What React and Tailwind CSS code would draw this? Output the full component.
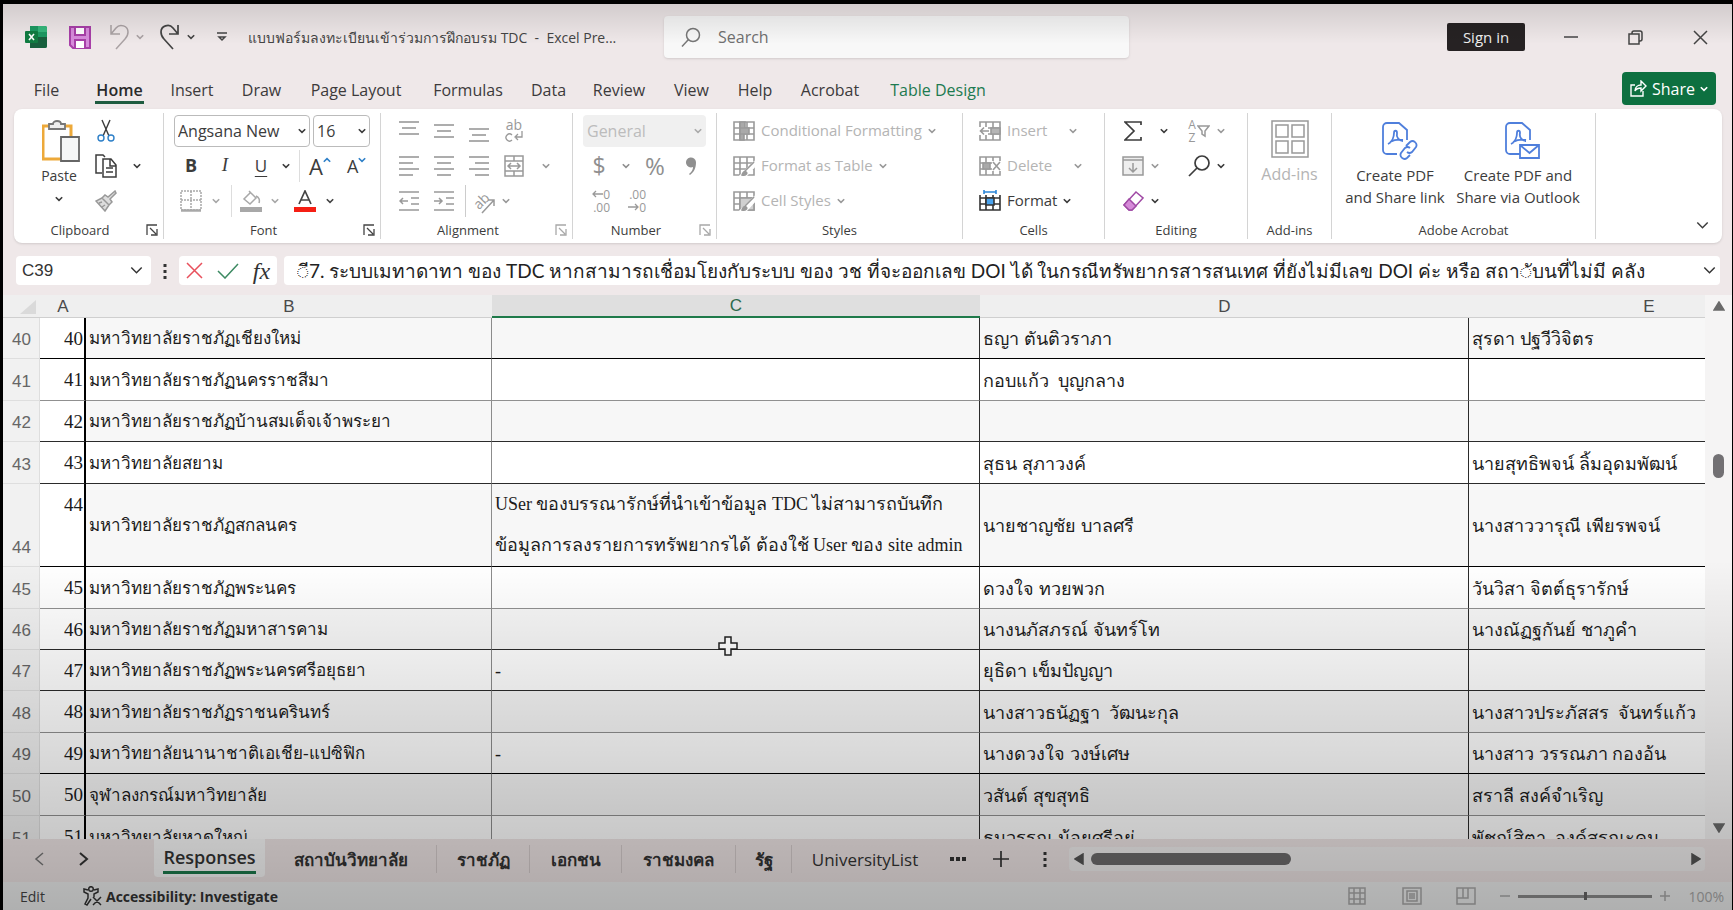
import React, { useState } from "react";

const ui = "font-['Open_Sans','Noto_Sans',sans-serif]";

const menuTabs = [
  { name: "File", cls: "w-[27px] ml-[30px]" },
  { name: "Home", cls: "w-[49px] ml-[35px]" },
  { name: "Insert", cls: "w-[42px] ml-[27px]" },
  { name: "Draw", cls: "w-[41px] ml-[28px]" },
  { name: "Page Layout", cls: "w-[94px] ml-[27px]" },
  { name: "Formulas", cls: "w-[72px] ml-[29px]" },
  { name: "Data", cls: "w-[37px] ml-[26px]" },
  { name: "Review", cls: "w-[54px] ml-[25px]" },
  { name: "View", cls: "w-[37px] ml-[27px]" },
  { name: "Help", cls: "w-[36px] ml-[27px]" },
  { name: "Acrobat", cls: "w-[62px] ml-[26px]" },
  { name: "Table Design", cls: "w-[98px] ml-[28px] text-[#1d7a50]" },
];

const dark = "border-b-[#2b2b2b]";
const black = "border-b-black";
const light = "border-b-[#909090]";

const rows = [
  { n: 40, h: "h-[41px]", line: black, b: "มหาวิทยาลัยราชภัฏเชียงใหม่", d: "ธญา ตันติวราภา", e: "สุรดา ปฐวีวิจิตร" },
  { n: 41, h: "h-[42px]", line: light, b: "มหาวิทยาลัยราชภัฏนครราชสีมา", d: "กอบแก้ว  บุญกลาง" },
  { n: 42, h: "h-[41px]", line: dark, b: "มหาวิทยาลัยราชภัฏบ้านสมเด็จเจ้าพระยา" },
  { n: 43, h: "h-[42px]", line: dark, b: "มหาวิทยาลัยสยาม", d: "สุธน สุภาวงค์", e: "นายสุทธิพจน์ ลิ้มอุดมพัฒน์" },
  {
    n: 44,
    h: "h-[83px]",
    line: black,
    b: "มหาวิทยาลัยราชภัฏสกลนคร",
    c: "USer ของบรรณารักษ์ที่นำเข้าข้อมูล TDC ไม่สามารถบันทึก\nข้อมูลการลงรายการทรัพยากรได้ ต้องใช้ User ของ site admin",
    d: "นายชาญชัย บาลศรี",
    e: "นางสาววารุณี เพียรพจน์",
  },
  { n: 45, h: "h-[42px]", line: light, b: "มหาวิทยาลัยราชภัฏพระนคร", d: "ดวงใจ ทวยพวก", e: "วันวิสา จิตต์ธุรารักษ์" },
  { n: 46, h: "h-[41px]", line: dark, b: "มหาวิทยาลัยราชภัฏมหาสารคาม", d: "นางนภัสภรณ์ จันทร์โท", e: "นางณัฏฐกันย์ ชาภูคำ", cursor: true },
  { n: 47, h: "h-[41px]", line: dark, b: "มหาวิทยาลัยราชภัฏพระนครศรีอยุธยา", c: "-", d: "ยุธิดา เข็มปัญญา" },
  { n: 48, h: "h-[42px]", line: light, b: "มหาวิทยาลัยราชภัฏราชนครินทร์", d: "นางสาวธนัฏฐา  วัฒนะกุล", e: "นางสาวประภัสสร  จันทร์แก้ว" },
  { n: 49, h: "h-[41px]", line: black, b: "มหาวิทยาลัยนานาชาติเอเชีย-แปซิฟิก", c: "-", d: "นางดวงใจ วงษ์เศษ", e: "นางสาว วรรณภา กองอ้น" },
  { n: 50, h: "h-[42px]", line: light, b: "จุฬาลงกรณ์มหาวิทยาลัย", d: "วสันต์ สุขสุทธิ", e: "สราลี สงค์จำเริญ" },
  { n: 51, h: "h-[42px]", line: dark, b: "มหาวิทยาลัยหาดใหญ่", d: "ธนวรรณ น้อยศรีอยู่", e: "พัชณ์สิตา  องค์สรณะคม" },
];

const sheets = [
  { name: "สถาบันวิทยาลัย", cls: "w-[172px]" },
  { name: "ราชภัฏ", cls: "w-[93px]" },
  { name: "เอกชน", cls: "w-[92px]" },
  { name: "ราชมงคล", cls: "w-[114px]" },
  { name: "รัฐ", cls: "w-[56px]" },
];

function Svg({ w = 22, h = w, box, className = "", children, sw = 1.5 }) {
  return (
    <svg
      width={w}
      height={h}
      viewBox={box || `0 0 ${w} ${h}`}
      fill="none"
      stroke="currentColor"
      strokeWidth={sw}
      className={`shrink-0 ${className}`}
      aria-hidden="true"
    >
      {children}
    </svg>
  );
}

function Chevron({ className = "", size = 8 }) {
  return (
    <Svg w={size} h={size} box="0 0 8 8" className={className} sw={size > 10 ? 0.9 : 1.6}>
      <path d="M0.8 2.2 4 5.4 7.2 2.2" />
    </Svg>
  );
}

function Tool({ label, className = "", children }) {
  return (
    <button type="button" aria-label={label} className={`flex shrink-0 items-center justify-center ${className}`}>
      {children}
    </button>
  );
}

function Group({ label, className, pad = "", launcher, faded, children }) {
  return (
    <section className={`my-1 flex shrink-0 flex-col border-r border-[#d4d4d4] ${className}`}>
      <div className={`h-[108px] ${pad}`}>{children}</div>
      <div className="flex h-[18px] items-center">
        <span className="flex-1 text-center text-[13px] leading-4 text-[#3c3c3c]">{label}</span>
        {launcher && (
          <Tool label={`${label} settings`} className={`mr-[5px] w-3 ${faded ? "text-[#a8a8a8]" : "text-[#444]"}`}>
            <Svg w={12} sw={1.3}>
              <path d="M1 11V1h10M4 4l6 6M11 5v6H5" />
            </Svg>
          </Tool>
        )}
      </div>
    </section>
  );
}

function Row({ className = "", children }) {
  return <div className={`flex h-[35px] items-center ${className}`}>{children}</div>;
}

function Lines({ rows: list }) {
  return (
    <Svg w={20} h={22} sw={1.6}>
      {list.map(([x1, x2, y]) => (
        <path key={y} d={`M${x1} ${y}H${x2}`} />
      ))}
    </Svg>
  );
}

function TableIcon({ kind }) {
  const blue = kind === "format";
  return (
    <Svg w={22} className={blue ? "text-[#333]" : "text-[#9a9a9a]"} sw={1.6}>
      <path d="M1 2h20v18H1zM1 8h20M1 14h20M7 2v18M14 2v18" />
      {kind === "cond" && <path d="M7 2h5v6H7zM7 8h9v6H7zM7 14h4v6H7z" fill="#a9a9a9" />}
      {kind === "insert" && (
        <>
          <path d="M0 7h9v8H0z" fill="#fff" stroke="none" />
          <path d="M12 8h9v6h-9z" fill="#b5b5b5" />
          <path d="M10 11H2M5 7.500 1.500 11 5 14.500" />
        </>
      )}
      {kind === "delete" && (
        <>
          <path d="M13 6h9v10h-9z" fill="#fff" stroke="none" />
          <path d="M4 8h7v6H4z" fill="#a9a9a9" />
          <path d="m14 7 7 8M21 7l-7 8" />
        </>
      )}
      {(kind === "table" || kind === "cell") && (
        <>
          {kind === "cell" && <path d="M7 8h14v12H7z" fill="#d0d0d0" />}
          <path d="M21 7 11 17l-4 4h6l9-10z" fill="#fff" stroke="#fff" />
          <path d="M21 7 12 16M9 20c1-3 2-4 4-3s0 4-4 3z" fill="#9a9a9a" />
        </>
      )}
      {blue && (
        <>
          <path d="M0 0h22v5H0z" fill="#fff" stroke="none" />
          <path d="M7 8h8v7H7z" fill="#4aa3ee" />
          <path d="M5 0v4M17 0v4M5 2h12" stroke="#2b86d9" />
        </>
      )}
    </Svg>
  );
}

function PdfIcon({ mail }) {
  return (
    <Svg w={36} h={38} className="ml-[10px] text-[#4f7fdc]" sw={1.8}>
      <path d="M15 32H5a4 4 0 0 1-4-4V5a4 4 0 0 1 4-4h12l8 7v10" />
      <path d="M6 22c4-2 6-7 6-11 0-3 3-3 3 0-1 4 2 8 6 8M8 20c4-2 8-3 13-2" sw={1.4} />
      {mail ? (
        <path d="M15 23h19v13H15zM15 23l9.500 8L34 23" />
      ) : (
        <path d="m24 24 4-4a4 4 0 0 1 6 5l-4 5a4 4 0 0 1-5 0M28 26a4 4 0 0 0-5 0l-4 5a4 4 0 0 0 6 5l3-3" />
      )}
    </Svg>
  );
}

function TitleBar() {
  return (
    <header className="flex h-[66px] shrink-0 items-center text-[#444]">
      <Svg w={22} className="ml-[22px]">
        <g stroke="none">
          <path d="M5 0h15a2 2 0 0 1 2 2v18a2 2 0 0 1-2 2H5z" fill="#1c9a62" />
          <path d="M5 11h17v9a2 2 0 0 1-2 2H5z" fill="#17603d" />
          <path d="M13 0h7a2 2 0 0 1 2 2v4h-9z" fill="#35b87c" />
          <rect y="5" width="13" height="12" rx="1" fill="#107c41" />
        </g>
        <path d="m4 8 5 6M9 8l-5 6" stroke="#fff" strokeWidth="1.6" />
      </Svg>
      <Tool label="Save" className="ml-[22px]">
        <Svg w={22} h={23} className="text-[#a83fa8]" sw={2}>
          <path d="M1 1h20v21H4l-3-3z" fill="#d78bdc" />
          <path d="M6 1h10v8H6zM6 22v-8h10v8" fill="#fff" />
        </Svg>
      </Tool>
      <Tool label="Undo" className="ml-[18px] text-[#aaa2a4]">
        <Svg w={20} h={26}>
          <path d="M2 1v9h9M2 10 7 4c4-5 12-2 12 4 0 3-1 5-3 7l-9 10" />
        </Svg>
        <Chevron className="ml-[7px]" />
      </Tool>
      <Tool label="Redo" className="ml-[16px]">
        <Svg w={20} h={26} sw={1.7}>
          <path d="M18 1v9H9M18 10l-5-6C9-1 1 2 1 8c0 3 1 5 3 7l9 10" />
        </Svg>
        <Chevron className="ml-[7px]" />
      </Tool>
      <Tool label="Customize quick access" className="ml-[21px]">
        <Svg w={12} sw={1.5}>
          <path d="M1 2h10M3 6l3 3 3-3z" />
        </Svg>
      </Tool>
      <h1 className="ml-5 w-[382px] text-[14px] whitespace-pre">
        แบบฟอร์มลงทะเบียนเข้าร่วมการฝึกอบรม TDC  -  Excel Pre...
      </h1>
      <label className="ml-[34px] flex h-[42px] w-[465px] shrink-0 items-center rounded bg-[#f8f8f8] shadow">
        <Svg w={20} className="ml-[17px] text-[#777]">
          <circle cx="12" cy="8" r="6.500" />
          <path d="m7.500 12.500-6.500 7" />
        </Svg>
        <span className="sr-only">Search</span>
        <input
          type="search"
          placeholder="Search"
          className="ml-[17px] h-8 flex-1 bg-transparent text-base outline-none placeholder:text-[#707070]"
        />
      </label>
      <div className="flex flex-1 items-center justify-end">
        <button type="button" className="h-7 w-[78px] rounded-xs bg-[#262223] text-[15px] text-[#efefef]">
          Sign in
        </button>
        <Tool label="Minimize" className="ml-[39px]">
          <Svg w={14}>
            <path d="M0 7h14" />
          </Svg>
        </Tool>
        <Tool label="Restore" className="ml-[50px]">
          <Svg w={15} sw={1.5}>
            <path d="M1 4h10v10H1zM4 4V3q0-2 2-2h6q2 0 2 2v6q0 2-2 2h-1" />
          </Svg>
        </Tool>
        <Tool label="Close" className="mr-[24px] ml-[50px]">
          <Svg w={15} sw={1.5}>
            <path d="m1 1 13 13M14 1 1 14" />
          </Svg>
        </Tool>
      </div>
    </header>
  );
}

function MenuBar() {
  return (
    <nav className="flex h-[39px] shrink-0 items-start">
      {menuTabs.map((t) => (
        <button
          key={t.name}
          type="button"
          className={`flex h-[34px] shrink-0 justify-center pt-2 text-base leading-6 whitespace-nowrap ${t.cls} ${
            t.name === "Home" ? "border-b-3 border-[#1f5c40] font-semibold text-[#2a2a2a]" : ""
          }`}
        >
          {t.name}
        </button>
      ))}
      <button
        type="button"
        className="mt-[2px] mr-4 ml-auto flex h-[33px] w-[94px] items-center justify-center gap-[5px] rounded bg-[#0d7040] text-base text-white"
      >
        <Svg w={17} sw={1.4}>
          <path d="M5 5H1v11h12v-5M5 11c0-4 3-6 6-6V1l5 5-5 5V8c-3 0-5 1-6 3z" />
        </Svg>
        Share
        <Chevron />
      </button>
    </nav>
  );
}

function Ribbon() {
  const [font, setFont] = useState("Angsana New");
  return (
    <div className="mr-[10px] ml-[11px] flex h-[134px] shrink-0 rounded-lg bg-white text-[15px] text-[#3c3c3c] shadow-sm">
      <Group label="Clipboard" className="w-[150px]" launcher>
        <div className="flex">
          <button type="button" className="ml-[25px] flex h-[108px] w-[40px] flex-col items-center pt-[7px]">
            <Svg w={38} h={42} className="ml-1" sw={1.8}>
              <path d="M1 6h28v33H1z" stroke="#eda93a" fill="#fff" strokeWidth="3" />
              <path d="M7 9V4h4c0-4 8-4 8 0h4v5z" fill="#eee" stroke="#777" />
              <path d="M19 17h18v24H19z" fill="#f5f6f6" stroke="#666" />
            </Svg>
            <span className="text-[14px] leading-7">Paste</span>
            <Chevron className="mt-[5px]" />
          </button>
          <div className="ml-[15px]">
            <Row>
              <Tool label="Cut" className="w-[24px]">
                <Svg w={18} h={24} sw={1.4}>
                  <path d="m5 1 7 16M13 1 6 17" />
                  <circle cx="4" cy="19" r="3" stroke="#2f80c8" />
                  <circle cx="14" cy="19" r="3" stroke="#2f80c8" />
                </Svg>
              </Tool>
            </Row>
            <Row>
              <Tool label="Copy" className="w-[24px]">
                <Svg w={22} h={24}>
                  <path d="M7 19H1V1h7l2 2M8 5h8l5 6v12H8zM15 5v7h6M11 14h7M11 18h7" />
                </Svg>
              </Tool>
              <Tool label="Copy options" className="ml-[15px]">
                <Chevron />
              </Tool>
            </Row>
            <Row>
              <Tool label="Format painter" className="w-[24px] text-[#999]">
                <Svg w={22}>
                  <path d="m20 1-7 6-3-2-3 3 7 7 3-3-2-3 6-6zM7 8l-6 3 9 10 4-6M4 13l3-1m0 5 3-2" fill="#ddd" />
                </Svg>
              </Tool>
            </Row>
          </div>
        </div>
      </Group>

      <Group label="Font" className="w-[217px]" pad="pl-[10px]" launcher>
        <Row className="gap-[3px]">
          <div className="relative">
            <select
              aria-label="Font"
              value={font}
              onChange={(e) => setFont(e.target.value)}
              className="h-8 w-[136px] appearance-none rounded border border-[#bbb] pl-[3px] text-base"
            >
              <option>Angsana New</option>
              <option>Calibri</option>
            </select>
            <Chevron className="pointer-events-none absolute top-3 right-1" />
          </div>
          <div className="relative">
            <select aria-label="Font size" className="h-8 w-[57px] appearance-none rounded border border-[#bbb] pl-[3px] text-base">
              <option>16</option>
              <option>18</option>
            </select>
            <Chevron className="pointer-events-none absolute top-3 right-1" />
          </div>
        </Row>
        <Row>
          <Tool label="Bold" className="ml-[5px] w-6 text-[18px] font-bold">B</Tool>
          <Tool label="Italic" className="ml-[10px] w-6 font-['Liberation_Serif',serif] text-[19px] italic">I</Tool>
          <Tool label="Underline" className="ml-[12px] w-6 text-[17px] underline underline-offset-4">U</Tool>
          <Tool label="Underline options" className="ml-[9px]"><Chevron /></Tool>
          <span className="ml-[9px] h-8 w-px bg-[#ddd]" />
          <Tool label="Grow font" className="ml-[9px] text-[22px] leading-7">
            A<Chevron className="mb-3 rotate-180 text-[#2f80c8]" />
          </Tool>
          <Tool label="Shrink font" className="ml-[16px] text-[18px] leading-7">
            A<Chevron className="mb-3 text-[#2f80c8]" />
          </Tool>
        </Row>
        <Row className="text-[#a8a8a8]">
          <Tool label="Borders" className="ml-[5px] w-6">
            <Svg w={22}>
              <path d="M1 1h20v19H1zM11 1v19M1 10h20" strokeDasharray="2 1" />
              <path d="M1 20.500h20" strokeWidth="2.500" />
            </Svg>
          </Tool>
          <Tool label="Border options" className="ml-[9px]"><Chevron /></Tool>
          <span className="ml-[11px] h-8 w-px bg-[#ddd]" />
          <Tool label="Fill color" className="ml-[7px] w-6">
            <Svg w={22}>
              <path d="m9 1 7 7-6 6-6-5 7-7M16 6c3 1 4 4 3 7" />
              <path d="M0 19.500h22" strokeWidth="5" />
            </Svg>
          </Tool>
          <Tool label="Fill options" className="ml-[8px]"><Chevron /></Tool>
          <Tool label="Font color" className="ml-[14px] w-6 text-[#444]">
            <Svg w={22} sw={1.7}>
              <path d="M5 14 11 1l6 13M7 10h8" />
              <path d="M0 19.500h22" stroke="#f51f14" strokeWidth="5" />
            </Svg>
          </Tool>
          <Tool label="Font color options" className="ml-[9px] text-[#444]"><Chevron /></Tool>
        </Row>
      </Group>

      <Group label="Alignment" className="w-[192px]" pad="pl-[18px]" launcher faded>
        <Row className="gap-[15px] text-[#999]">
          <Tool label="Top align"><Lines rows={[[0, 20, 2], [3, 17, 8], [0, 20, 14]]} /></Tool>
          <Tool label="Middle align"><Lines rows={[[0, 20, 5], [3, 17, 11], [0, 20, 17]]} /></Tool>
          <Tool label="Bottom align"><Lines rows={[[0, 20, 9], [3, 17, 15], [0, 20, 21]]} /></Tool>
          <Tool label="Wrap text" className="h-6 w-5 flex-col text-[14px] leading-3">
            <span>ab</span>
            <Svg w={18} h={11} sw={1.3}>
              <path d="M7 4a3.500 3.500 0 1 0 0 5M17 0v6h-6M13 3l-3 3 3 3" />
            </Svg>
          </Tool>
        </Row>
        <Row className="gap-[15px] text-[#999]">
          <Tool label="Align left"><Lines rows={[[0, 20, 2], [0, 14, 8], [0, 20, 14], [0, 14, 20]]} /></Tool>
          <Tool label="Center"><Lines rows={[[0, 20, 2], [3, 17, 8], [0, 20, 14], [3, 17, 20]]} /></Tool>
          <Tool label="Align right"><Lines rows={[[0, 20, 2], [6, 20, 8], [0, 20, 14], [6, 20, 20]]} /></Tool>
          <Tool label="Merge">
            <Svg w={20} h={22}>
              <path d="M1 1h18v20H1zM1 6h18M1 16h18M10 1v5M10 16v5M4 11h12M7 8l-3 3 3 3M13 8l3 3-3 3" />
            </Svg>
          </Tool>
          <Tool label="Merge options"><Chevron className="ml-[3px]" /></Tool>
        </Row>
        <Row className="gap-[15px] text-[#999]">
          <Tool label="Decrease indent">
            <Svg w={20} h={22}>
              <path d="M0 2h20M12 8h8M12 14h8M0 20h20M9 11H1M4 8l-3 3 3 3" />
            </Svg>
          </Tool>
          <Tool label="Increase indent">
            <Svg w={20} h={22}>
              <path d="M0 2h20M12 8h8M12 14h8M0 20h20M0 11h8M5 8l3 3-3 3" />
            </Svg>
          </Tool>
          <span className="-mr-2 -ml-1 h-8 w-px bg-[#ccc]" />
          <Tool label="Orientation">
            <span className="-rotate-45 text-[14px] leading-4">ab</span>
            <Svg w={14} h={18} className="mt-2 -ml-2">
              <path d="M1 17 13 4M7 4h6v6" />
            </Svg>
          </Tool>
          <Tool label="Orientation options"><Chevron className="-ml-2" /></Tool>
        </Row>
      </Group>

      <Group label="Number" className="w-[144px]" pad="pl-[10px]" launcher faded>
        <Row>
          <div className="relative">
            <select
              aria-label="Number format"
              disabled
              className="h-8 w-[123px] appearance-none rounded bg-[#f0f0f0] pl-1 text-base text-[#bcbcbc] opacity-100"
            >
              <option>General</option>
            </select>
            <Chevron className="pointer-events-none absolute top-3 right-1 text-[#aaa]" />
          </div>
        </Row>
        <Row className="text-[#8f8f8f]">
          <Tool label="Currency" className="ml-2 w-4 text-[23px]">$</Tool>
          <Tool label="Currency options" className="ml-[15px]"><Chevron /></Tool>
          <Tool label="Percent" className="ml-[14px] w-[22px] text-[24px]">%</Tool>
          <Tool label="Comma style" className="ml-[19px]">
            <Svg w={12} h={20}>
              <path d="M4 18c3-2 4-5 4-7a5 5 0 1 1 3-5c0 6-2 10-6 13z" fill="currentColor" stroke="none" />
            </Svg>
          </Tool>
        </Row>
        <Row className="gap-3 pl-[3px] text-[12px] leading-[13px] text-[#999]">
          <Tool label="Increase decimal" className="w-6 flex-col">
            <span className="flex items-center self-end">
              <Svg w={11} h={8} sw={1.3}><path d="M11 4H1M4 1 1 4l3 3" /></Svg>0
            </span>
            <span className="self-end">.00</span>
          </Tool>
          <Tool label="Decrease decimal" className="w-6 flex-col">
            <span className="self-end">.00</span>
            <span className="flex items-center self-end">
              <Svg w={11} h={8} sw={1.3}><path d="M0 4h10M7 1l3 3-3 3" /></Svg>0
            </span>
          </Tool>
        </Row>
      </Group>

      <Group label="Styles" className="w-[246px]" pad="pl-[16px]">
        {[
          ["cond", "Conditional Formatting"],
          ["table", "Format as Table"],
          ["cell", "Cell Styles"],
        ].map(([kind, label]) => (
          <Row key={kind}>
            <button type="button" className="flex items-center gap-[6px] text-[15px] text-[#b4b4b4]">
              <TableIcon kind={kind} />
              {label}
              <Chevron className="text-[#999]" />
            </button>
          </Row>
        ))}
      </Group>

      <Group label="Cells" className="w-[142px]" pad="pl-[16px]">
        <Row className="text-[#b4b4b4]">
          <button type="button" className="flex w-[76px] items-center gap-[6px]"><TableIcon kind="insert" />Insert</button>
          <Tool label="Insert options" className="ml-[14px]"><Chevron className="text-[#999]" /></Tool>
        </Row>
        <Row className="text-[#b4b4b4]">
          <button type="button" className="flex w-[80px] items-center gap-[6px]"><TableIcon kind="delete" />Delete</button>
          <Tool label="Delete options" className="ml-[15px]"><Chevron className="text-[#999]" /></Tool>
        </Row>
        <Row>
          <button type="button" className="flex items-center gap-[6px]"><TableIcon kind="format" />Format<Chevron /></button>
        </Row>
      </Group>

      <Group label="Editing" className="w-[143px]" pad="pl-[16px]">
        <Row>
          <Tool label="AutoSum" className="w-6">
            <Svg w={18} h={20} sw={1.7}>
              <path d="M17 4V1H1l9 9-9 9h16v-3" />
            </Svg>
          </Tool>
          <Tool label="AutoSum options" className="ml-[15px]"><Chevron /></Tool>
          <Tool label="Sort and filter" className="ml-[19px] w-6 text-[#999]">
            <span className="flex flex-col text-[12px] leading-[13px]"><span>A</span><span>Z</span></span>
            <Svg w={13} h={14} className="ml-px">
              <path d="M1 2h11L8 7v5l-3-2V7z" />
            </Svg>
          </Tool>
          <Tool label="Sort options" className="ml-[6px] text-[#999]"><Chevron /></Tool>
        </Row>
        <Row>
          <Tool label="Fill" className="w-6 text-[#999]">
            <Svg w={22} h={20}>
              <path d="M1 1h20v18H1z" fill="#eee" />
              <path d="M1 4h20M11 7v9M7 12l4 4 4-4" />
            </Svg>
          </Tool>
          <Tool label="Fill options" className="ml-[6px] text-[#999]"><Chevron /></Tool>
          <Tool label="Find" className="ml-[28px] w-6">
            <Svg w={22} h={22} sw={1.7}>
              <circle cx="14" cy="8" r="7" />
              <path d="m9 13-8 8" />
            </Svg>
          </Tool>
          <Tool label="Find options" className="ml-[6px]"><Chevron /></Tool>
        </Row>
        <Row>
          <Tool label="Clear" className="w-6">
            <Svg w={21} h={20} className="text-[#a04aa5]">
              <path d="M13 1l7 6-11 12H6l-5-5z" fill="#fff" />
              <path d="m6 8 7 7-4 4H6l-5-5z" fill="#d58ad8" />
            </Svg>
          </Tool>
          <Tool label="Clear options" className="ml-[6px]"><Chevron /></Tool>
        </Row>
      </Group>

      <Group label="Add-ins" className="w-[84px]">
        <button type="button" className="flex w-full flex-col items-center pt-[7px] text-base text-[#b4b4b4]">
          <Svg w={38} className="text-[#999]">
            <path d="M1 1h36v36H1zM5 5h12v12H5zM21 5h12v12H21zM5 21h12v12H5zM21 21h12v12H21z" />
          </Svg>
          <span className="mt-1">Add-ins</span>
        </button>
      </Group>

      <Group label="Adobe Acrobat" className="w-[264px]">
        <div className="flex text-[15px] leading-[22px]">
          <button type="button" className="ml-2 flex w-[110px] flex-col items-center pt-[9px] whitespace-nowrap">
            <PdfIcon />
            <span className="mt-1">Create PDF</span>
            <span>and Share link</span>
          </button>
          <button type="button" className="flex w-[136px] flex-col items-center pt-[9px] whitespace-nowrap">
            <PdfIcon mail />
            <span className="mt-1">Create PDF and</span>
            <span>Share via Outlook</span>
          </button>
        </div>
      </Group>

      <div className="flex flex-1 items-end justify-end pr-[13px] pb-[11px]">
        <Tool label="Collapse ribbon"><Chevron size={13} /></Tool>
      </div>
    </div>
  );
}

function FormulaBar() {
  return (
    <div className="mt-[13px] mr-3 mb-[10px] ml-[13px] flex h-[29px] shrink-0 items-stretch text-[#333]">
      <label className="flex w-[135px] items-center rounded bg-white pr-2">
        <input
          aria-label="Name box"
          defaultValue="C39"
          className="w-full min-w-0 pl-[6px] font-['Liberation_Sans',sans-serif] text-[17px] outline-none"
        />
        <Chevron size={13} />
      </label>
      <Svg w={4} h={16} className="mx-3 self-center">
        <path d="M2 1v3M2 7v3M2 13v3" strokeWidth="3" />
      </Svg>
      <div className="flex w-[98px] items-center justify-around rounded bg-white">
        <Tool label="Cancel">
          <Svg w={17} className="text-[#e8505c]">
            <path d="m1 1 15 15M16 1 1 16" />
          </Svg>
        </Tool>
        <Tool label="Enter">
          <Svg w={22} h={16} className="text-[#3c8a62]">
            <path d="m1 8 7 7L21 1" />
          </Svg>
        </Tool>
        <Tool label="Insert function" className="font-['Liberation_Serif',serif] text-[24px] leading-6 italic">
          fx
        </Tool>
      </div>
      <div className="ml-[7px] flex min-w-0 flex-1 items-center rounded bg-white pr-1">
        <input
          aria-label="Formula bar"
          defaultValue="◌ี7. ระบบเมทาดาทา ของ TDC หากสามารถเชื่อมโยงกับระบบ ของ วช ที่จะออกเลข DOI ได้ ในกรณีทรัพยากรสารสนเทศ ที่ยังไม่มีเลข DOI ค่ะ หรือ สถา◌ับนที่ไม่มี คลัง"
          className="h-full min-w-0 flex-1 pl-[13px] font-['Lato','Noto_Sans',sans-serif] text-[19px] text-[#222] outline-none"
        />
        <Chevron size={13} />
      </div>
    </div>
  );
}

function Cursor() {
  return (
    <Svg w={20} className="absolute top-[27px] left-[226px] z-10">
      <path d="M7 1h6v6h6v6h-6v6H7v-6H1V7h6z" fill="#fff" stroke="#222" />
    </Svg>
  );
}

function Sheet() {
  const head = "h-[23px] border-b border-[#cfcfcf] p-0 pt-[2px] font-normal leading-5";
  return (
    <div className="flex min-h-0 flex-1">
      <div className="min-w-0 flex-1 overflow-hidden">
        <table className="w-[1826px] table-fixed border-separate border-spacing-0 font-['Liberation_Serif',serif] text-[18px] text-[#1c1c1c]">
          <colgroup>
            <col className="w-[37px]" />
            <col className="w-[46px]" />
            <col className="w-[406px]" />
            <col className="w-[488px]" />
            <col className="w-[489px]" />
            <col className="w-[360px]" />
          </colgroup>
          <thead>
            <tr className="bg-[#efefef] font-['Liberation_Sans',sans-serif] text-[17px] text-[#4a4a4a]">
              <th className={head} aria-label="Select all">
                <Svg w={16} h={14} className="mr-1 ml-auto">
                  <path d="M16 0v14H0z" fill="#dadada" stroke="none" />
                </Svg>
              </th>
              <th className={head}>A</th>
              <th className={head}>B</th>
              <th className="h-[23px] border-b-2 border-[#1f7a4a] bg-[#dfdfdf] p-0 pt-px leading-5 font-normal text-[#2d6a4c]">C</th>
              <th className={head}>D</th>
              <th className={head}>E</th>
            </tr>
          </thead>
          <tbody>
            {rows.map((r) => {
              const cell = `border-b p-0 pl-[3px] whitespace-pre ${r.line} ${r.n % 2 ? "bg-white" : "bg-[#f7f7f7]"}`;
              const oneLine = "pt-[2px] leading-[38px]";
              return (
                <tr key={r.n} className={r.h}>
                  <th className="border-r border-b border-[#dedede] bg-[#f1f1f1] p-0 pr-2 text-right align-bottom font-['Liberation_Sans',sans-serif] text-[17px] leading-[37px] font-normal text-[#666]">
                    {r.n}
                  </th>
                  <td className={`border-r-2 border-b border-r-black bg-white p-0 pt-[2px] pr-px text-right align-top text-[19px] leading-[38px] ${r.line}`}>
                    {r.n}
                  </td>
                  <td className={`border-r border-r-[#8c8c8c] text-[17px] ${cell} ${oneLine}`}>{r.b}</td>
                  <td className={`relative border-r border-r-[#2b2b2b] ${cell} ${r.n === 44 ? "leading-[41px]" : oneLine}`}>
                    {r.c}
                    {r.cursor && <Cursor />}
                  </td>
                  <td className={`border-r border-r-[#2b2b2b] ${cell} ${oneLine}`}>{r.d}</td>
                  <td className={`${cell} ${oneLine}`}>{r.e}</td>
                </tr>
              );
            })}
          </tbody>
        </table>
      </div>
      <div className="flex w-[27px] shrink-0 flex-col items-center bg-[#f5f4f4] py-[6px] text-[#6a6a6a]">
        <Tool label="Scroll up">
          <Svg w={12} h={10}><path d="M6 1 1 9h10z" fill="currentColor" /></Svg>
        </Tool>
        <div className="mt-[143px] h-6 w-[11px] rounded-full bg-[#727073]" />
        <Tool label="Scroll down" className="mt-auto">
          <Svg w={12} h={10}><path d="M6 9 1 1h10z" fill="currentColor" /></Svg>
        </Tool>
      </div>
    </div>
  );
}

function SheetTabs() {
  return (
    <div className="flex h-[43px] shrink-0 items-center bg-[#efe6e6] pb-[3px] text-base text-[#333]">
      <Tool label="Previous sheet" className="ml-[31px] text-[#777]">
        <Svg w={12} h={14}><path d="M9 1 2 7l7 6" /></Svg>
      </Tool>
      <Tool label="Next sheet" className="ml-[32px]">
        <Svg w={12} h={14} sw={2}><path d="m2 1 7 6-7 6" /></Svg>
      </Tool>
      <button type="button" className="ml-[64px] flex h-[38px] w-[111px] shrink-0 justify-center self-start rounded-b bg-[#fafafa] pt-1 text-[18px] leading-7 font-semibold">
        <span className="h-[31px] border-b-3 border-[#1c7a4c]">Responses</span>
      </button>
      {sheets.map((s) => (
        <button key={s.name} type="button" className={`h-7 shrink-0 border-r border-[#d5cccc] pt-[2px] text-[17px] leading-[26px] font-semibold ${s.cls}`}>
          {s.name}
        </button>
      ))}
      <button type="button" className="ml-[18px] h-7 w-[110px] pt-[2px] text-[17px] leading-[26px]">UniversityList</button>
      <Tool label="More sheets" className="ml-[29px]">
        <Svg w={18} h={4}><path d="M1 2h4M7 2h4M13 2h4" strokeWidth="4" /></Svg>
      </Tool>
      <Tool label="Add sheet" className="ml-[26px]">
        <Svg w={16} sw={1.7}><path d="M8 0v16M0 8h16" /></Svg>
      </Tool>
      <Svg w={4} h={16} className="ml-[34px]">
        <path d="M2 1v3M2 7v3M2 13v3" strokeWidth="3" />
      </Svg>
      <div className="mr-[27px] ml-[22px] flex h-6 flex-1 items-center rounded bg-[#f2f0f0] pr-1 pl-[5px] text-[#555]">
        <Tool label="Scroll left">
          <Svg w={10} h={12}><path d="M1 6l8-5v10z" fill="currentColor" /></Svg>
        </Tool>
        <div className="ml-[7px] h-3 w-[200px] rounded-full bg-[#6d6b6c]" />
        <Tool label="Scroll right" className="ml-auto">
          <Svg w={10} h={12}><path d="M9 6 1 1v10z" fill="currentColor" /></Svg>
        </Tool>
      </div>
    </div>
  );
}

function StatusBar() {
  return (
    <footer className="flex h-7 shrink-0 items-center bg-[#f0f1f1] text-[14px] text-[#444]">
      <span className="ml-[17px] w-[62px]">Edit</span>
      <button type="button" className="flex items-center gap-1 font-bold text-[#333]">
        <Svg w={20} sw={1.5}>
          <circle cx="9" cy="3" r="2.300" />
          <path d="M6 4 2 3v3l4 2v4l-3 6 2 1 4-6M12 4l4-1v3l-4 2v3M11 11l8 8M19 11l-8 8" />
        </Svg>
        Accessibility: Investigate
      </button>
      <div className="ml-auto flex items-center text-[#aaa]">
        <Tool label="Normal view">
          <Svg w={18}><path d="M1 1h16v16H1zM1 6h16M1 12h16M6 1v16M12 1v16" /></Svg>
        </Tool>
        <Tool label="Page layout view" className="ml-9">
          <Svg w={20} h={18}><path d="M1 1h18v16H1zM5 4h10v10H5zM7 7h6M7 9h6M7 11h6" /></Svg>
        </Tool>
        <Tool label="Page break view" className="ml-[34px]">
          <Svg w={20} h={18}><path d="M1 1h18v16H1zM1 11h11V1M7 1v10" /></Svg>
        </Tool>
        <Tool label="Zoom out" className="ml-6">
          <Svg w={10}><path d="M0 5h10" /></Svg>
        </Tool>
        <input
          type="range"
          aria-label="Zoom"
          className="mx-2 h-[3px] w-[134px] appearance-none bg-[#8c8c8c] [&::-webkit-slider-thumb]:h-2 [&::-webkit-slider-thumb]:w-[3px] [&::-webkit-slider-thumb]:appearance-none [&::-webkit-slider-thumb]:bg-[#666]"
        />
        <Tool label="Zoom in">
          <Svg w={10}><path d="M0 5h10M5 0v10" /></Svg>
        </Tool>
        <span className="mr-2 ml-[18px]">100%</span>
      </div>
    </footer>
  );
}

export default function App() {
  return (
    <div className={`h-screen overflow-hidden bg-black pt-1 pr-px pl-[3px] ${ui}`}>
      <div className="relative flex h-full flex-col overflow-hidden bg-[#efe8e9] text-[#3c3a3b]">
        <TitleBar />
        <MenuBar />
        <Ribbon />
        <FormulaBar />
        <Sheet />
        <SheetTabs />
        <StatusBar />
        {/* shading along the top and bottom edges of the window */}
        <div className="pointer-events-none absolute inset-x-0 top-0 z-20 h-10 bg-linear-to-b from-black/12 to-transparent" />
        <div className="pointer-events-none absolute inset-x-0 bottom-0 z-20 h-[350px] bg-linear-to-b from-transparent to-black/27" />
      </div>
    </div>
  );
}
